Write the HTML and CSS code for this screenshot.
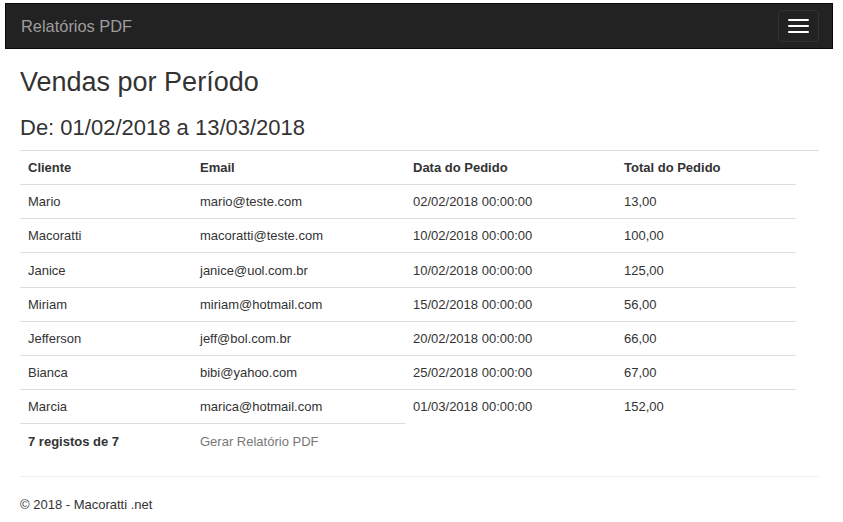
FILE: index.html
```html
<!DOCTYPE html>
<html lang="pt">
<head>
  <meta charset="UTF-8" />
  <meta name="viewport" content="width=device-width, initial-scale=1.0"/>
  <title>Relatórios PDF</title>
  <link rel="stylesheet" href="styles.css">
</head>
<body>

<nav class="navbar">
  <a class="brand" href="#">Relatórios PDF</a>
  <button class="toggle" type="button">
    <span class="bar"></span>
    <span class="bar"></span>
    <span class="bar"></span>
  </button>
</nav>

<div class="content">
  <h2>Vendas por Período</h2>
  <h3>De: 01/02/2018 a 13/03/2018</h3>

  <div class="report">
    <table class="sales">
      <thead>
        <tr>
          <th class="c1">Cliente</th>
          <th class="c2">Email</th>
          <th class="c3">Data do Pedido</th>
          <th class="c4">Total do Pedido</th>
        </tr>
      </thead>
      <tbody>
        <tr><td>Mario</td><td>mario@teste.com</td><td>02/02/2018 00:00:00</td><td>13,00</td></tr>
        <tr><td>Macoratti</td><td>macoratti@teste.com</td><td>10/02/2018 00:00:00</td><td>100,00</td></tr>
        <tr><td>Janice</td><td>janice@uol.com.br</td><td>10/02/2018 00:00:00</td><td>125,00</td></tr>
        <tr><td>Miriam</td><td>miriam@hotmail.com</td><td>15/02/2018 00:00:00</td><td>56,00</td></tr>
        <tr><td>Jefferson</td><td>jeff@bol.com.br</td><td>20/02/2018 00:00:00</td><td>66,00</td></tr>
        <tr><td>Bianca</td><td>bibi@yahoo.com</td><td>25/02/2018 00:00:00</td><td>67,00</td></tr>
        <tr><td>Marcia</td><td>marica@hotmail.com</td><td>01/03/2018 00:00:00</td><td>152,00</td></tr>
      </tbody>
      <tfoot>
        <tr>
          <td class="total">7 registos de 7</td>
          <td><a class="pdf-link" href="#">Gerar Relatório PDF</a></td>
          <td class="empty"></td>
          <td class="empty"></td>
        </tr>
      </tfoot>
    </table>
  </div>

  <hr>
  <footer>
    <p>&copy; 2018 - Macoratti .net</p>
  </footer>
</div>

</body>
</html>
```

FILE: styles.css
```css
* {
  box-sizing: border-box;
}

body {
  margin: 0;
  font-family: "Liberation Sans", Arial, sans-serif;
  font-size: 13px;
  line-height: 18.4px;
  color: #333;
  background: #fff;
}

a {
  text-decoration: none;
}

.navbar {
  display: flex;
  align-items: center;
  justify-content: space-between;
  height: 46px;
  margin: 3px 10px 0 5px;
  padding: 0 13px 0 15px;
  background: #222;
  border: 1px solid #080808;
}

.brand {
  font-size: 16.4px;
  color: #9d9d9d;
}

.toggle {
  display: flex;
  flex-direction: column;
  align-items: center;
  justify-content: center;
  gap: 4px;
  width: 41px;
  height: 32px;
  padding: 0;
  background: transparent;
  border: 1px solid #333;
  border-radius: 4px;
}

.toggle .bar {
  display: block;
  width: 21px;
  height: 2px;
  background: #fff;
  border-radius: 1px;
}

.content {
  padding: 0 24px 0 20px;
}

h2 {
  margin: 19px 0 0;
  font-size: 27px;
  font-weight: 500;
  line-height: 1.1;
}

h3 {
  margin: 18px 0 0;
  font-size: 22px;
  font-weight: 500;
  line-height: 1.1;
}

.report {
  margin-top: 10px;
  border-top: 1px solid #ddd;
}

.sales {
  width: 776px;
  border-collapse: collapse;
}

.sales th,
.sales td {
  padding: 8.2px 8px 6.6px;
  text-align: left;
  vertical-align: top;
}

.sales th {
  font-weight: bold;
  border-bottom: 1px solid #ddd;
}

.sales tbody td,
.sales tfoot td {
  border-top: 1px solid #ddd;
}

.sales tfoot td.empty {
  border-top: none;
}

.c1 { width: 172px; }
.c2 { width: 213px; }
.c3 { width: 211px; }
.c4 { width: 180px; }

.total {
  font-weight: bold;
}

.pdf-link {
  color: #777;
}

hr {
  margin: 18px 0 0;
  border: 0;
  border-top: 1px solid #eee;
}

footer p {
  margin: 19px 0 0;
}
```
